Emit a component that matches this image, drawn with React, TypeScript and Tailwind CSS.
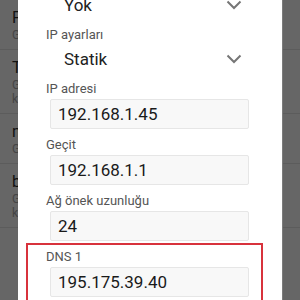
import type { ReactNode } from "react";

type ListItem = {
  title: string;
  lines: string[];
};

const items: ListItem[] = [
  { title: "F", lines: ["G"] },
  { title: "T", lines: ["G", "k"] },
  { title: "n", lines: ["G"] },
  { title: "b", lines: ["G", "k"] },
];

function BackList({ showText }: { showText: boolean }) {
  return (
    <div className="flex flex-col">
      {items.map((item, i) => (
        <div key={i} className="border-b border-[#5c5c5c] pb-[7px] pt-[8px] pl-[12px]">
          <div className="h-[20px] text-[16px] leading-[20px] text-[#111]">{showText ? item.title : ""}</div>
          {item.lines.map((line, j) => (
            <div key={j} className="h-[14px] text-[12px] leading-[14px] text-[#444]">
              {showText ? line : ""}
            </div>
          ))}
        </div>
      ))}
    </div>
  );
}

function Chevron() {
  return (
    <svg width="16" height="10" viewBox="0 0 16 10" className="text-[#767676]">
      <path d="M1.5 1.5 L8 8 L14.5 1.5" fill="none" stroke="currentColor" strokeWidth="2" />
    </svg>
  );
}

function Spinner({ value }: { value: string }) {
  return (
    <div className="flex h-[24px] items-center justify-between pl-[46px] pr-[40px]">
      <span className="text-[17px] leading-[24px] text-[#222]">{value}</span>
      <Chevron />
    </div>
  );
}

function Label({ children, boxed }: { children: ReactNode; boxed?: boolean }) {
  return (
    <div className={boxed ? "h-[16px] pl-[18px] text-[13px] leading-[16px] text-[#555]" : "h-[16px] pl-[28px] text-[13px] leading-[16px] text-[#555]"}>
      {children}
    </div>
  );
}

function Input({ value, boxed }: { value: string; boxed?: boolean }) {
  return (
    <div
      className={
        boxed
          ? "ml-[22px] mt-[2px] h-[30px] w-[199px] rounded-[2px] border border-[#e6e6e6] bg-[#f8f8f8] pl-[7px] text-[17px] leading-[28px] text-[#1a1a1a]"
          : "ml-[32px] mt-[2px] h-[30px] w-[199px] rounded-[2px] border border-[#e6e6e6] bg-[#f8f8f8] pl-[7px] text-[17px] leading-[28px] text-[#1a1a1a]"
      }
    >
      {value}
    </div>
  );
}

export default function App() {
  return (
    <div className="flex h-[300px] w-[300px] overflow-hidden bg-[#666]" style={{ fontFamily: "Roboto, 'Noto Sans', sans-serif" }}>
      <div className="w-[18px] shrink-0 overflow-hidden">
        <BackList showText />
      </div>

      <div className="w-[264px] shrink-0 bg-white">
        <div className="mt-[-7px] flex flex-col">
          <Spinner value="Yok" />
          <div className="mt-[10px]">
            <Label>IP ayarları</Label>
          </div>
          <div className="mt-[4px]">
            <Spinner value="Statik" />
          </div>

          <div className="mt-[10px]">
            <Label>IP adresi</Label>
            <Input value="192.168.1.45" />
          </div>
          <div className="mt-[8px]">
            <Label>Geçit</Label>
            <Input value="192.168.1.1" />
          </div>
          <div className="mt-[8px]">
            <Label>Ağ önek uzunluğu</Label>
            <Input value="24" />
          </div>

          <div className="ml-[8px] mt-[2px] w-[237px] border-2 border-[#d8323c] pb-[10px] pt-[4px]">
            <Label boxed>DNS 1</Label>
            <Input boxed value="195.175.39.40" />
          </div>
        </div>
      </div>

      <div className="w-[18px] shrink-0 overflow-hidden border-l border-[#7c7c7c]">
        <BackList showText={false} />
      </div>
    </div>
  );
}
